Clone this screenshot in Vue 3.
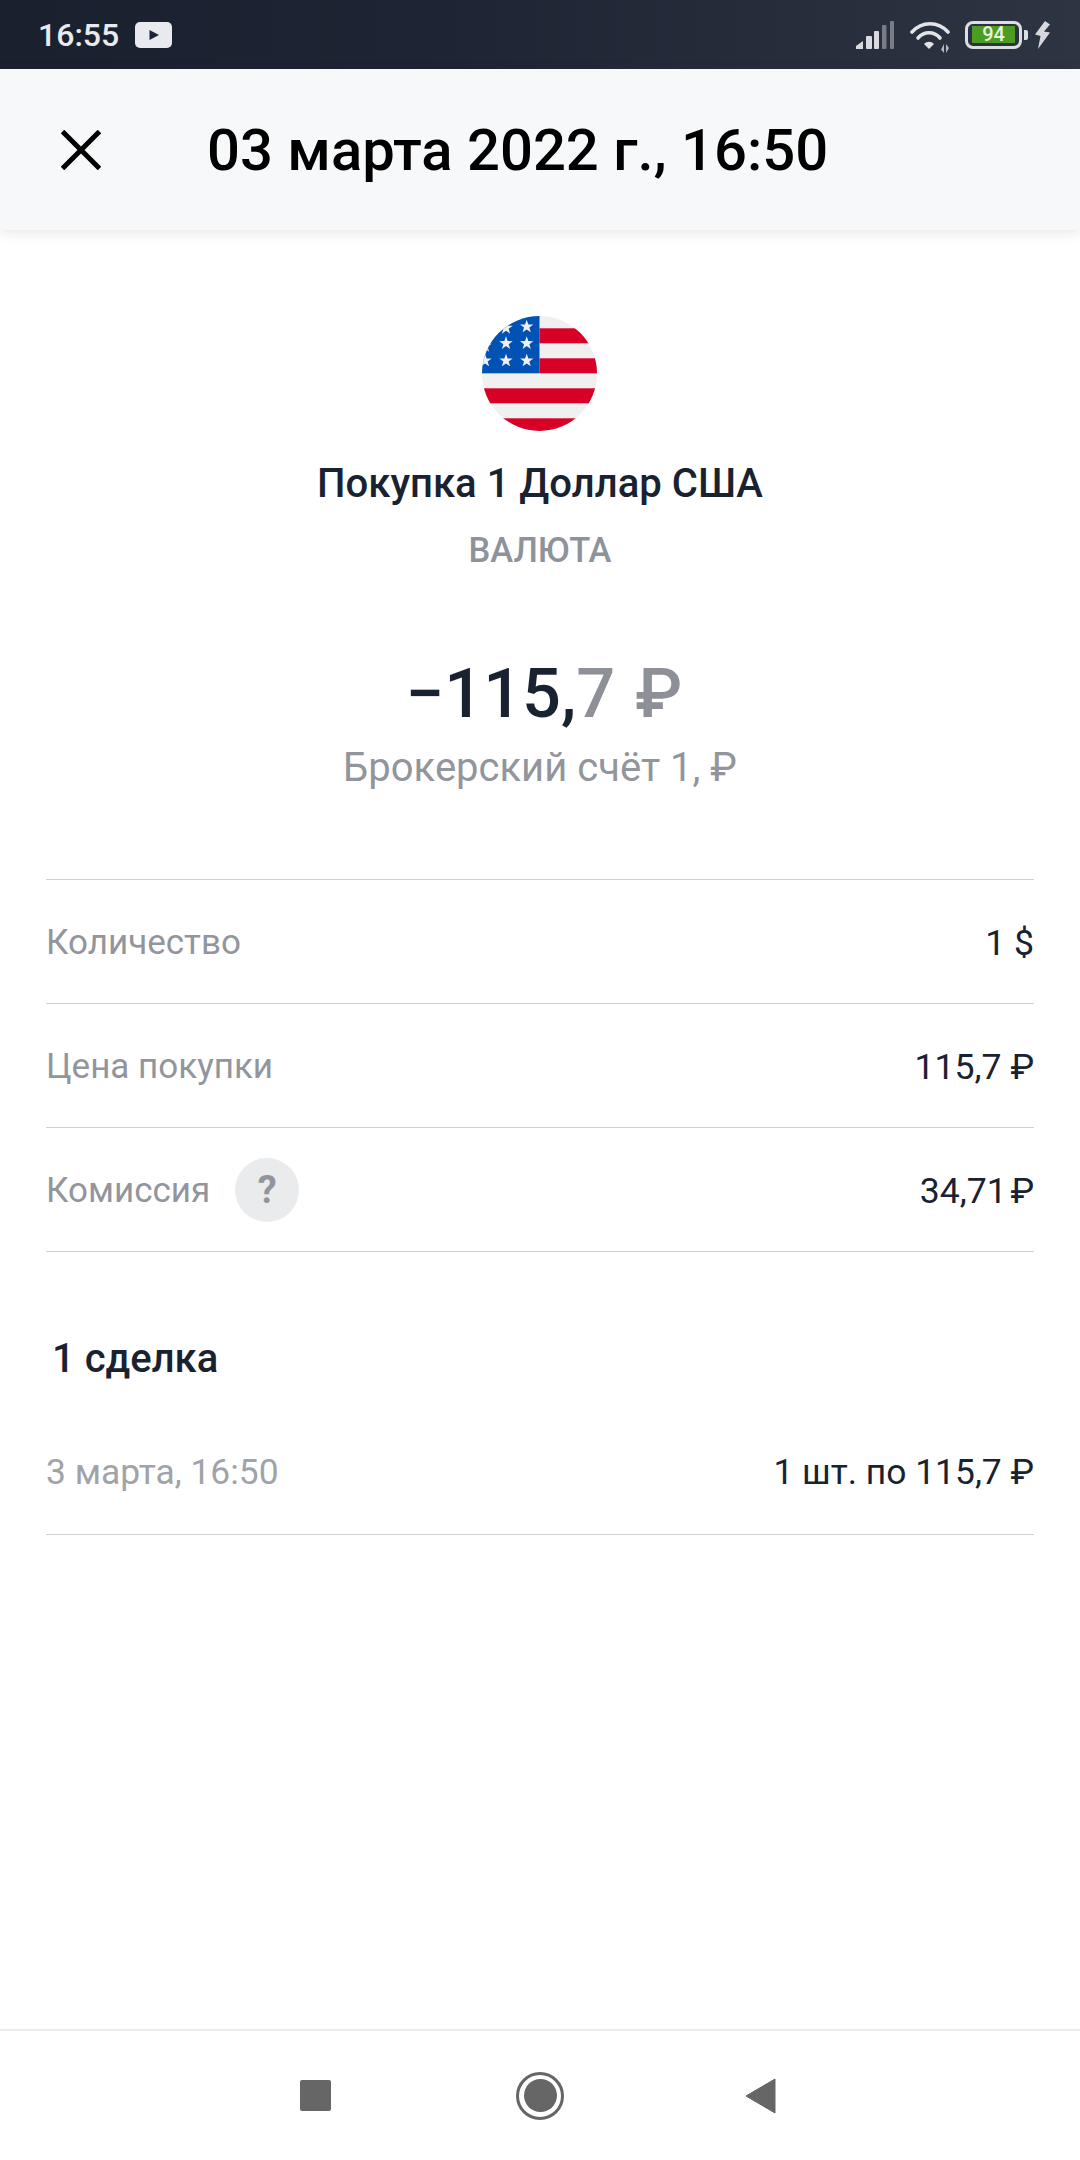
<script setup>
const rows = [
  { label: 'Количество', value: '1 $' },
  { label: 'Цена покупки', value: '115,7 ₽' },
  { label: 'Комиссия', value: '34,71\u200a₽', help: true },
]
const stars = [[44.7, 10.7], [24, 12], [24, 27.3], [44.7, 27.3], [3, 30], [3, 44.7], [24, 44.7], [44.7, 44.7]]
const starPath = (x, y) => {
  let d = ''
  for (let i = 0; i < 10; i++) {
    const r = i % 2 ? 2.8 : 7
    const a = -Math.PI / 2 + i * Math.PI / 5
    d += (i ? 'L' : 'M') + (x + r * Math.cos(a)).toFixed(2) + ' ' + (y + r * Math.sin(a)).toFixed(2)
  }
  return d + 'Z'
}
</script>

<template>
  <div class="screen">
    <div class="statusbar">
      <div class="status-left">
        <span class="time">16:55</span>
        <svg class="yt" width="37" height="26" viewBox="0 0 37 26">
          <rect width="37" height="26" rx="5" fill="#e8eaef" />
          <path d="M14.500 8L24 13L14.500 18Z" fill="#1c2434" />
        </svg>
      </div>
      <div class="status-right">
        <svg class="signal" width="38" height="28" viewBox="0 0 38 28">
          <path d="M0 28V25L7 20V28Z" fill="#d9dbe0" />
          <rect x="10" y="15" width="6" height="13" rx="1" fill="#d9dbe0" />
          <rect x="18" y="10" width="5" height="18" rx="1" fill="#d9dbe0" />
          <rect x="26" y="4" width="4.500" height="24" rx="1" fill="#777c87" />
          <rect x="34" y="0" width="4" height="28" rx="1" fill="#777c87" />
        </svg>
        <svg class="wifi" width="40" height="32" viewBox="0 0 40 32">
          <path d="M2 11C12 0 28 0 38 11" fill="none" stroke="#e2e4e8" stroke-width="3.600" stroke-linecap="round" />
          <path d="M8 17C14 10 24 10 30 17" fill="none" stroke="#e2e4e8" stroke-width="3.600" stroke-linecap="round" />
          <path d="M14 23C17 20 21 20 24 23L19 28Z" fill="#e2e4e8" />
          <path d="M34 23V32L31 28.500ZM36 23L39 27L36 32Z" fill="#b5b8bf" />
        </svg>
        <div class="battery">
          <div class="battery-body"><span class="battery-fill">94</span></div>
          <i class="battery-tip"></i>
        </div>
        <svg class="bolt" width="15" height="28" viewBox="0 0 15 28">
          <path d="M10 0L0 13.500L5.500 15L3 28L15 11.500L9 10.500L15 3.500Z" fill="#d6d8dd" />
        </svg>
      </div>
    </div>

    <header class="topbar">
      <svg class="close" width="40" height="40" viewBox="0 0 40 40">
        <path d="M1.500 1.500L38.500 38.500M38.500 1.500L1.500 38.500" stroke="#000" stroke-width="5" fill="none" />
      </svg>
      <h1 class="topbar-title">03 марта 2022 г., 16:50</h1>
    </header>

    <main class="content">
      <section class="hero">
        <svg class="flag" width="115" height="115" viewBox="0 0 115 115">
          <defs>
            <clipPath id="flagclip"><circle cx="57.500" cy="57.500" r="57.500" /></clipPath>
          </defs>
          <g clip-path="url(#flagclip)">
            <rect width="115" height="115" fill="#f0f0f0" />
            <rect x="57.500" y="12.300" width="58" height="15" fill="#d80027" />
            <rect x="57.500" y="42.300" width="58" height="15" fill="#d80027" />
            <rect x="0" y="72.300" width="115" height="15" fill="#d80027" />
            <rect x="0" y="102.300" width="115" height="13" fill="#d80027" />
            <rect x="0" y="0" width="57.500" height="57.300" fill="#0052b4" />
            <path v-for="(s, i) in stars" :key="i" :d="starPath(s[0], s[1])" fill="#f0f0f0" />
          </g>
        </svg>
        <div class="hero-title">Покупка 1 Доллар США</div>
        <div class="hero-kind">ВАЛЮТА</div>
        <div class="amount"><span>−115,</span><span class="amount-dim">7 ₽</span></div>
        <div class="account">Брокерский счёт 1, ₽</div>
      </section>

      <section class="details">
        <div v-for="r in rows" :key="r.label" class="row">
          <div class="row-label">
            <span>{{ r.label }}</span>
            <span v-if="r.help" class="help">?</span>
          </div>
          <span class="row-value">{{ r.value }}</span>
        </div>
      </section>

      <h2 class="deals-title">1 сделка</h2>
      <div class="deal">
        <span class="deal-date">3 марта, 16:50</span>
        <span class="row-value deal-value">1 шт. по 115,7 ₽</span>
      </div>
    </main>

    <nav class="navbar">
      <i class="nav-square"></i>
      <i class="nav-home"><i class="nav-dot"></i></i>
      <svg class="nav-back" width="31" height="36" viewBox="0 0 31 36">
        <path d="M30 1V35L1 18Z" fill="#666" stroke="#666" stroke-width="1" stroke-linejoin="round" />
      </svg>
    </nav>
  </div>
</template>

<style scoped>
.screen {
  width: 1080px;
  height: 2160px;
  display: flex;
  flex-direction: column;
  background: #fff;
  font-family: Roboto, "Noto Sans", sans-serif;
  color: #192231;
  overflow: hidden;
}
.statusbar {
  height: 69px;
  flex: none;
  display: flex;
  justify-content: space-between;
  align-items: center;
  padding: 0 30px 0 38px;
  background: linear-gradient(90deg, #19212f 0%, #1d2534 40%, #2d3542 100%);
}
.status-left,
.status-right {
  display: flex;
  align-items: center;
}
.time {
  font-size: 32px;
  font-weight: 500;
  color: #e8eaef;
}
.yt {
  margin-left: 16px;
}
.signal {
  margin-right: 16px;
}
.wifi {
  margin: 4px 15px 0 0;
}
.battery {
  display: flex;
  align-items: center;
  gap: 2px;
  margin-right: 7px;
}
.battery-body {
  width: 57px;
  height: 28px;
  box-sizing: border-box;
  border: 3.500px solid #dcdee2;
  border-radius: 8px;
  padding: 2.500px 4px;
  display: flex;
}
.battery-fill {
  flex: 1;
  background: #4a9c22;
  color: #e9f5df;
  font-size: 20px;
  font-weight: 500;
  line-height: 17px;
  text-align: center;
}
.battery-tip {
  width: 4px;
  height: 10px;
  background: #dcdee2;
  border-radius: 0 2px 2px 0;
}
.topbar {
  height: 161px;
  flex: none;
  display: flex;
  align-items: center;
  background: #f6f8fa;
  box-shadow: 0 2px 12px rgba(30, 35, 45, 0.12);
  position: relative;
}
.close {
  margin-left: 61px;
  flex: none;
}
.topbar-title {
  margin: 0 0 0 106px;
  font-size: 58px;
  font-weight: 500;
  color: #000;
  white-space: nowrap;
}
.content {
  flex: 1;
  padding: 0 46px;
}
.hero {
  display: flex;
  flex-direction: column;
  align-items: center;
  padding-top: 86px;
}
.flag {
  margin-right: 1px;
}
.hero-title {
  margin-top: 28px;
  font-size: 40.100px;
  line-height: 50px;
  font-weight: 500;
}
.hero-kind {
  margin-top: 21px;
  font-size: 34.500px;
  line-height: 40px;
  font-weight: 500;
  color: #8e939b;
}
.amount {
  margin-top: 84px;
  padding-left: 8px;
  font-size: 68.500px;
  line-height: 80px;
  font-weight: 500;
  word-spacing: 3px;
}
.amount-dim {
  color: #8e9098;
}
.account {
  margin-top: 12px;
  font-size: 40px;
  line-height: 44px;
  color: #92959c;
}
.details {
  margin-top: 89px;
  border-top: 1px solid #cfd0d2;
}
.row {
  height: 121px;
  padding-top: 2px;
  border-bottom: 1px solid #cfd0d2;
  display: flex;
  justify-content: space-between;
  align-items: center;
}
.row-label {
  display: flex;
  align-items: center;
  font-size: 35px;
  color: #92959c;
}
.help {
  width: 64px;
  height: 64px;
  margin-left: 25px;
  margin-top: -2px;
  border-radius: 50%;
  background: #e9ebed;
  color: #92959c;
  font-size: 38px;
  font-weight: 700;
  display: flex;
  align-items: center;
  justify-content: center;
}
.row-value {
  font-size: 35.600px;
}
.deal-value {
  font-size: 35.400px;
}
.deals-title {
  margin: 82px 0 0 6px;
  font-size: 40px;
  line-height: 50px;
  font-weight: 500;
}
.deal {
  height: 151px;
  box-sizing: border-box;
  padding-top: 26px;
  border-bottom: 1px solid #cfd0d2;
  display: flex;
  justify-content: space-between;
  align-items: center;
}
.deal-date {
  font-size: 35.400px;
  color: #a0a3a9;
}
.navbar {
  height: 129px;
  flex: none;
  border-top: 2px solid #ececec;
  display: flex;
  align-items: center;
  padding: 0 0 0 300px;
}
.nav-square {
  width: 31px;
  height: 31px;
  border-radius: 2px;
  background: #666;
}
.nav-home {
  width: 48px;
  height: 48px;
  margin: 0 181px 0 185px;
  box-sizing: border-box;
  border: 3px solid #666;
  border-radius: 50%;
  display: flex;
  align-items: center;
  justify-content: center;
}
.nav-dot {
  width: 33px;
  height: 33px;
  border-radius: 50%;
  background: #666;
}
</style>
